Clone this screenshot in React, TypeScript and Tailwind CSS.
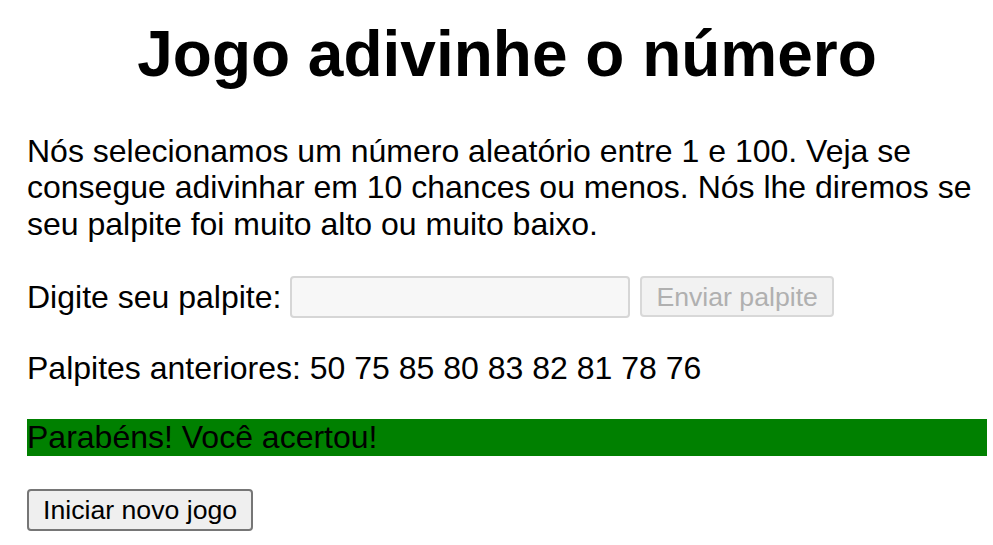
import React from "react";

const guesses = [50, 75, 85, 80, 83, 82, 81, 78, 76];

const App: React.FC = () => {
  return (
    <div className="min-h-screen bg-white text-black font-['Liberation_Sans',Arial,sans-serif]">
      <div className="ml-[27px] w-[960px] pt-[18px] text-[32px] leading-[36.8px]">
        <h1 className="text-center text-[64px] font-bold leading-[73.6px]">
          Jogo adivinhe o número
        </h1>

        <p className="mt-[41px]">
          Nós selecionamos um número aleatório entre 1 e 100. Veja se consegue
          adivinhar em 10 chances ou menos. Nós lhe diremos se seu palpite foi
          muito alto ou muito baixo.
        </p>

        <div className="mt-[33px] flex items-center h-[42px]">
          <label htmlFor="guessField">Digite seu palpite:</label>
          <input
            id="guessField"
            type="number"
            disabled
            className="ml-[9px] h-[42px] w-[340px] rounded-[4px] border-2 border-[#d6d6d6] bg-[#f7f7f7] px-[4px] text-[26.67px]"
          />
          <button
            disabled
            className="ml-[10px] h-[41px] rounded-[4px] border-2 border-[#d8d8d8] bg-[#f2f2f2] px-[14px] text-[26.67px] leading-[30px] text-[#b0b0b0]"
          >
            Enviar palpite
          </button>
        </div>

        <p className="mt-[32px]">Palpites anteriores: {guesses.join(" ")}</p>

        <p className="mt-[32px] bg-[#008000]">Parabéns! Você acertou!</p>

        <button className="mt-[33px] h-[42px] rounded-[4px] border-2 border-[#767676] bg-[#efefef] px-[14px] text-[26.67px] leading-[30px]">
          Iniciar novo jogo
        </button>
      </div>
    </div>
  );
};

export default App;
